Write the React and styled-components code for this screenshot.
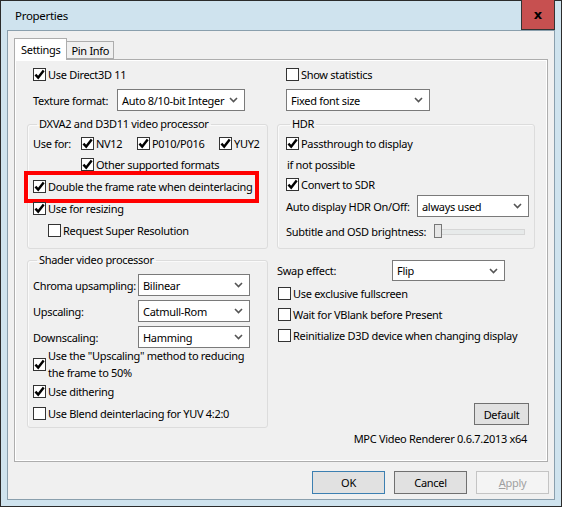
import React from "react";
import styled, { createGlobalStyle } from "styled-components";

const GlobalStyle = createGlobalStyle`
  html, body {
    margin: 0;
    padding: 0;
    background: #ffffff;
  }
  * {
    box-sizing: border-box;
  }
`;

const Window = styled.div`
  width: 562px;
  height: 507px;
  border: 1px solid #2b2b2b;
  background: #cfe3ee;
  display: flex;
  flex-direction: column;
  font-family: "Noto Sans", "Open Sans", sans-serif;
  font-size: 11px;
  letter-spacing: -0.3px;
  color: #000;
`;

const TitleBar = styled.div`
  height: 29px;
  display: flex;
  align-items: center;
  justify-content: space-between;
  padding-left: 14px;
  font-size: 11.5px;
`;

const CloseButton = styled.div`
  width: 34px;
  height: 30px;
  margin-top: -1px;
  margin-right: 6px;
  align-self: flex-start;
  background: #c75050;
  border: 1px solid #333;
  border-top: none;
  display: flex;
  align-items: center;
  justify-content: center;
  font-family: "DejaVu Sans", sans-serif;
  font-weight: bold;
  font-size: 13px;
  letter-spacing: 0;
`;

const Client = styled.div`
  flex: 1;
  margin: 0 6px 6px 6px;
  border: 1px solid #8a9fad;
  background: #f0f0f0;
  display: flex;
  flex-direction: column;
  padding: 7px 6px 5px 6px;
`;

const TabStrip = styled.div`
  display: flex;
  align-items: flex-end;
  height: 21px;
  position: relative;
  z-index: 1;
`;

const Tab = styled.div`
  height: ${({ $active }) => ($active ? "22px" : "18px")};
  padding: 0 ${({ $active }) => ($active ? "6px" : "4px")};
  margin-bottom: ${({ $active }) => ($active ? "-1px" : "0")};
  border: 1px solid #adadad;
  border-bottom: ${({ $active }) => ($active ? "none" : "1px solid #adadad")};
  border-left: ${({ $active }) => ($active ? "1px solid #adadad" : "none")};
  background: ${({ $active }) => ($active ? "#ffffff" : "#f0f0f0")};
  display: flex;
  align-items: center;
`;

const Pane = styled.div`
  flex: 1;
  border: 1px solid #adadad;
  box-shadow: inset 0 0 0 1px #ffffff;
  display: grid;
  grid-template-columns: 241px 258px;
  column-gap: 9px;
  padding: 4px 11px 15px 12px;
`;

const Column = styled.div`
  display: flex;
  flex-direction: column;
`;

const Row = styled.div`
  display: flex;
  align-items: center;
  justify-content: ${({ $end }) => ($end ? "flex-end" : "flex-start")};
  height: ${({ $h }) => $h || 22}px;
  margin-left: ${({ $indent }) => $indent || 0}px;
  margin-top: ${({ $mt }) => $mt || 0}px;
  padding-right: ${({ $pr }) => $pr || 0}px;
  position: relative;
`;

const Highlight = styled(Row)`
  &::after {
    content: "";
    position: absolute;
    left: -9px;
    right: 3px;
    top: -4px;
    bottom: -6px;
    border: 4px solid #ff0000;
    pointer-events: none;
  }
`;

const Label = styled.span`
  width: ${({ $w }) => ($w ? `${$w}px` : "auto")};
  flex-shrink: 0;
  white-space: nowrap;
`;

const CheckItem = styled.label`
  display: flex;
  align-items: center;
  width: ${({ $w }) => ($w ? `${$w}px` : "auto")};
  white-space: nowrap;
  line-height: 17px;
`;

const Box = styled.span`
  width: 13px;
  height: 13px;
  flex-shrink: 0;
  border: 1px solid #333333;
  background: #ffffff;
  margin-right: 2px;
  display: flex;
  align-items: center;
  justify-content: center;
`;

const Group = styled.fieldset`
  margin: ${({ $mt }) => $mt || 0}px 0 0 0;
  padding: ${({ $pt }) => $pt ?? 2}px 5px ${({ $pb }) => $pb || 6}px
    ${({ $pl }) => $pl || 5}px;
  border: 1px solid #dcdcdc;
  border-radius: 3px;
  box-shadow: inset 1px 1px 0 #fafafa;
  display: flex;
  flex-direction: column;
  min-width: 0;
`;

const Legend = styled.legend`
  padding: 0 2px;
  margin-left: 4px;
  line-height: 14px;
`;

const Select = styled.div`
  width: ${({ $w }) => $w}px;
  height: ${({ $h }) => $h || 22}px;
  border: 1px solid #7a7a7a;
  background: #ffffff;
  display: flex;
  align-items: center;
  justify-content: space-between;
  padding: 0 6px 0 4px;
  flex-shrink: 0;
  white-space: nowrap;
  overflow: hidden;
`;

const Slider = styled.div`
  position: relative;
  width: 91px;
  height: 14px;
  display: flex;
  align-items: center;
  &::before {
    content: "";
    position: absolute;
    left: 2px;
    right: 0;
    top: 5px;
    height: 4px;
    background: #e7eaea;
    border: 1px solid #d6d6d6;
  }
`;

const Thumb = styled.span`
  position: relative;
  width: 8px;
  height: 14px;
  background: #e6e6e6;
  border: 1px solid #777777;
`;

const Spacer = styled.div`
  flex: 1;
`;

const Button = styled.div`
  width: ${({ $w }) => $w || 73}px;
  height: ${({ $h }) => $h || 23}px;
  display: flex;
  align-items: center;
  justify-content: center;
  background: ${({ $disabled }) => ($disabled ? "#f4f4f4" : "#e1e1e1")};
  color: ${({ $disabled }) => ($disabled ? "#a0a0a0" : "#000")};
  border: 1px solid
    ${({ $primary, $disabled }) =>
      $primary ? "#3c7fb1" : $disabled ? "#c4c4c4" : "#707070"};
`;

const Footer = styled.div`
  display: flex;
  justify-content: flex-end;
  gap: 9px;
  margin-top: 9px;
  margin-right: -1px;
`;

const Version = styled.div`
  text-align: right;
  margin-top: 7px;
  padding-right: 8px;
  line-height: 14px;
`;

const Check = ({ checked }) => (
  <Box>
    {checked && (
      <svg width="11" height="11" viewBox="0 0 11 11">
        <path
          d="M1.4 5.6 L4.2 8.6 L9.7 1.6"
          fill="none"
          stroke="#000"
          strokeWidth="2.4"
        />
      </svg>
    )}
  </Box>
);

const CheckBox = ({ checked, children, w }) => (
  <CheckItem $w={w}>
    <Check checked={checked} />
    <span>{children}</span>
  </CheckItem>
);

const Chevron = () => (
  <svg width="9" height="6" viewBox="0 0 9 6">
    <path d="M1 1 L4.5 4.5 L8 1" fill="none" stroke="#555" strokeWidth="1.6" />
  </svg>
);

const Combo = ({ w, h, children }) => (
  <Select $w={w} $h={h}>
    <span>{children}</span>
    <Chevron />
  </Select>
);

export default function App() {
  return (
    <>
      <GlobalStyle />
      <Window>
        <TitleBar>
          <span>Properties</span>
          <CloseButton>x</CloseButton>
        </TitleBar>
        <Client>
          <TabStrip>
            <Tab $active>Settings</Tab>
            <Tab>Pin Info</Tab>
          </TabStrip>
          <Pane>
            <Column>
              <Row $h={20} $indent={6}>
                <CheckBox checked>Use Direct3D 11</CheckBox>
              </Row>
              <Row $indent={6} $mt={5}>
                <Label $w={84}>Texture format:</Label>
                <Combo w={128}>Auto 8/10-bit Integer</Combo>
              </Row>
              <Group $mt={6} $pt={1} $pb={7}>
                <Legend>DXVA2 and D3D11 video processor</Legend>
                <Row>
                  <Label $w={48}>Use for:</Label>
                  <CheckBox checked w={56}>NV12</CheckBox>
                  <CheckBox checked w={82}>P010/P016</CheckBox>
                  <CheckBox checked>YUY2</CheckBox>
                </Row>
                <Row $h={21} $indent={48}>
                  <CheckBox checked>Other supported formats</CheckBox>
                </Row>
                <Highlight>
                  <CheckBox checked>Double the frame rate when deinterlacing</CheckBox>
                </Highlight>
                <Row>
                  <CheckBox checked>Use for resizing</CheckBox>
                </Row>
                <Row $indent={15}>
                  <CheckBox>Request Super Resolution</CheckBox>
                </Row>
              </Group>
              <Group $mt={4} $pb={3}>
                <Legend>Shader video processor</Legend>
                <Row $mt={5}>
                  <Label $w={105}>Chroma upsampling:</Label>
                  <Combo w={112}>Bilinear</Combo>
                </Row>
                <Row $mt={4}>
                  <Label $w={105}>Upscaling:</Label>
                  <Combo w={112}>Catmull-Rom</Combo>
                </Row>
                <Row $mt={4}>
                  <Label $w={105}>Downscaling:</Label>
                  <Combo w={112}>Hamming</Combo>
                </Row>
                <Row $h={32}>
                  <CheckBox checked>
                    Use the "Upscaling" method to reducing
                    <br />
                    the frame to 50%
                  </CheckBox>
                </Row>
                <Row>
                  <CheckBox checked>Use dithering</CheckBox>
                </Row>
                <Row>
                  <CheckBox>Use Blend deinterlacing for YUV 4:2:0</CheckBox>
                </Row>
              </Group>
            </Column>
            <Column>
              <Row $h={20} $indent={9}>
                <CheckBox>Show statistics</CheckBox>
              </Row>
              <Row $indent={9} $mt={5}>
                <Combo w={144}>Fixed font size</Combo>
              </Row>
              <Group $mt={6} $pl={8} $pt={2} $pb={7}>
                <Legend>HDR</Legend>
                <Row $h={21}>
                  <CheckBox checked>Passthrough to display</CheckBox>
                </Row>
                <Row $h={20} $indent={1}>
                  <Label>if not possible</Label>
                </Row>
                <Row $h={20}>
                  <CheckBox checked>Convert to SDR</CheckBox>
                </Row>
                <Row $mt={1}>
                  <Label $w={131}>Auto display HDR On/Off:</Label>
                  <Combo w={112}>always used</Combo>
                </Row>
                <Row $h={20} $mt={4}>
                  <Label $w={148}>Subtitle and OSD brightness:</Label>
                  <Slider>
                    <Thumb />
                  </Slider>
                </Row>
              </Group>
              <Row $h={21} $mt={11}>
                <Label $w={115}>Swap effect:</Label>
                <Combo w={113} h={21}>Flip</Combo>
              </Row>
              <Row $h={21} $mt={2} $indent={1}>
                <CheckBox>Use exclusive fullscreen</CheckBox>
              </Row>
              <Row $h={21} $indent={1}>
                <CheckBox>Wait for VBlank before Present</CheckBox>
              </Row>
              <Row $h={21} $indent={1}>
                <CheckBox>Reinitialize D3D device when changing display</CheckBox>
              </Row>
              <Spacer />
              <Row $h={22} $end $pr={6}>
                <Button $w={55} $h={22}>Default</Button>
              </Row>
              <Version>MPC Video Renderer 0.6.7.2013 x64</Version>
            </Column>
          </Pane>
          <Footer>
            <Button $primary>OK</Button>
            <Button>Cancel</Button>
            <Button $disabled>
              <span>
                <u>A</u>pply
              </span>
            </Button>
          </Footer>
        </Client>
      </Window>
    </>
  );
}
